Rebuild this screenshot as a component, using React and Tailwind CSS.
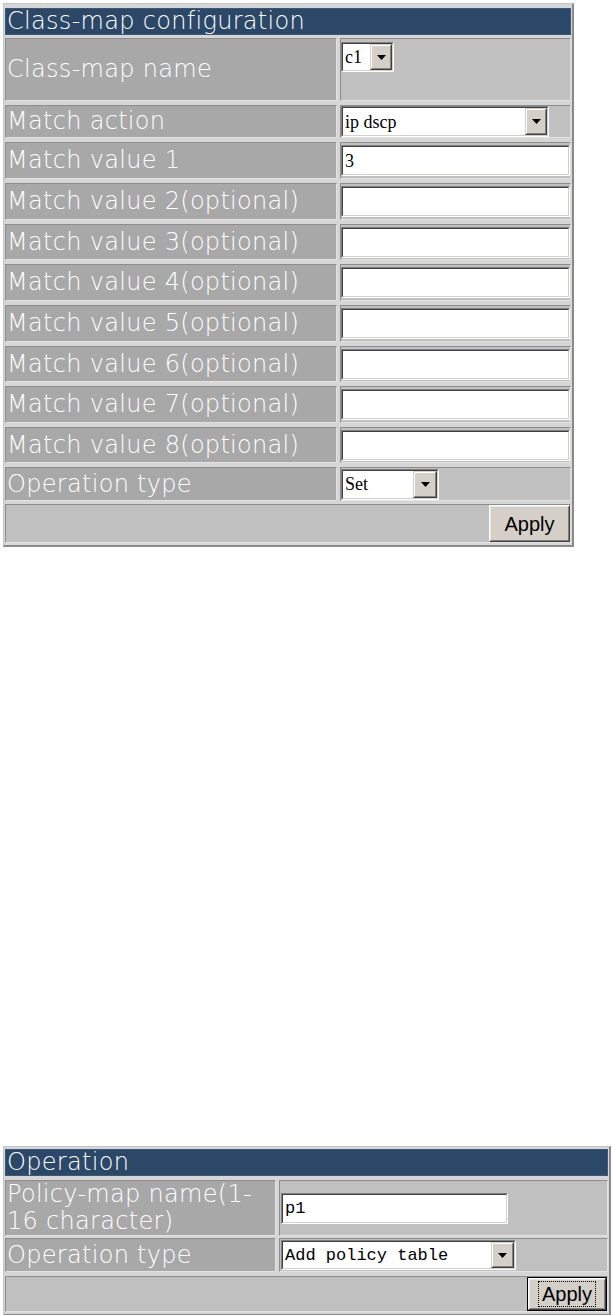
import React from 'react';

const LABEL = "font-['DejaVu_Sans',sans-serif] font-extralight text-[24px] leading-[27px] tracking-[0.3px] text-white whitespace-nowrap";
const bevel = 'border border-t-[#8c8c8c] border-l-[#8c8c8c] border-b-[#e2e2e2] border-r-[#e2e2e2]';

const Arrow = () => (
    <svg width="9" height="5" viewBox="0 0 9 5" className="block">
        <path d="M0 0h9L4.5 5z" fill="#000" />
    </svg>
);

// windows classic sunken box
const Sunken = ({ className = '', children }) => (
    <div className={`border border-t-[#808080] border-l-[#808080] border-b-[#ffffff] border-r-[#ffffff] ${className}`}>
        <div className="h-full border border-t-[#404040] border-l-[#404040] border-b-[#d4d0c8] border-r-[#d4d0c8] bg-white flex items-stretch">
            {children}
        </div>
    </div>
);

const Select = ({ value, className, font = "font-['Liberation_Serif',serif] text-[18px]", btn = 'w-[22px]' }) => (
    <Sunken className={className}>
        <div className={`flex-1 flex items-center pl-[2px] text-black leading-none overflow-hidden whitespace-nowrap ${font}`}>{value}</div>
        <div className={`${btn} bg-[#d4d0c8] border border-t-[#d4d0c8] border-l-[#d4d0c8] border-b-[#404040] border-r-[#404040]`}>
            <div className="h-full border border-t-white border-l-white border-b-[#808080] border-r-[#808080] flex items-center justify-center">
                <Arrow />
            </div>
        </div>
    </Sunken>
);

const TextInput = ({ value = '', className, font = "font-['Liberation_Serif',serif] text-[18px]" }) => (
    <Sunken className={className}>
        <div className={`flex-1 flex items-center pl-[2px] text-black leading-none ${font}`}>{value}</div>
    </Sunken>
);

const ApplyButton = ({ className = '', focused }) => (
    <div className={`${focused ? 'border border-black' : ''} ${className}`}>
        <div className="h-full border border-t-white border-l-white border-b-[#404040] border-r-[#404040] bg-[#d4d0c8]">
            <div className="h-full border border-t-[#e8e8e8] border-l-[#e8e8e8] border-b-[#808080] border-r-[#808080] flex items-center justify-center p-[2px]">
                <span className={`font-['Liberation_Sans',sans-serif] text-[20px] leading-none text-black px-[1px] ${focused ? 'outline outline-1 outline-dotted outline-black outline-offset-2' : ''}`}>
                    Apply
                </span>
            </div>
        </div>
    </div>
);

const Row = ({ label, height, cols, children, valueClass = 'items-center' }) => (
    <div className={`grid ${cols} gap-x-[3px]`} style={{ height }}>
        <div className={`${bevel} bg-[#a8a8a8] flex items-center pl-[1px] ${LABEL}`}>{label}</div>
        <div className={`${bevel} bg-[#c0c0c0] flex ${valueClass}`}>{children}</div>
    </div>
);

const Header = ({ title, height }) => (
    <div className={`bg-[#2c4868] border border-[#3a5878] flex items-center pl-[1px] ${LABEL}`} style={{ height }}>
        {title}
    </div>
);

const Gap = ({ h }) => <div style={{ height: h }} />;

const ClassMapTable = () => {
    const cols = 'grid-cols-[332px_1fr]';
    // row heights vary by a pixel in the original
    const optional = [[2, 37], [3, 36], [4, 37], [5, 37], [6, 36], [7, 37], [8, 36]];
    return (
        <div className="ml-[3px] mt-[3px] w-[571px] bg-[#d6d6d6] border-t border-l border-t-[#c4c4c4] border-l-[#c4c4c4] border-b-2 border-r-2 border-b-[#8a8a8a] border-r-[#8a8a8a] pt-[4px] pl-[1px] pr-[1px] pb-[2px] flex flex-col">
            <Header title="Class-map configuration" height={27} />
            <Gap h={3} />
            <Row label="Class-map name" height={63} cols={cols} valueClass="items-start pt-[3px]">
                <Select value="c1" className="w-[53px] h-[30px]" />
            </Row>
            <Gap h={4} />
            <Row label="Match action" height={33} cols={cols}>
                <Select value="ip dscp" className="w-[208px] h-[31px]" />
            </Row>
            <Gap h={4} />
            <Row label="Match value 1" height={37} cols={cols}>
                <TextInput value="3" className="w-[229px] h-[31px]" />
            </Row>
            {optional.map(([n, h]) => (
                <React.Fragment key={n}>
                    <Gap h={4} />
                    <Row label={`Match value ${n}(optional)`} height={h} cols={cols}>
                        <TextInput className="w-[229px] h-[31px]" />
                    </Row>
                </React.Fragment>
            ))}
            <Gap h={4} />
            <Row label="Operation type" height={34} cols={cols}>
                <Select value="Set" className="w-[98px] h-[31px]" btn="w-[24px]" />
            </Row>
            <Gap h={3} />
            <div className={`${bevel} bg-[#c0c0c0] h-[39px] flex items-stretch justify-end`}>
                <ApplyButton className="w-[81px]" />
            </div>
        </div>
    );
};

const OperationTable = () => {
    const cols = 'grid-cols-[271px_1fr]';
    const mono = "font-['Liberation_Mono',monospace] text-[17px]";
    return (
        <div className="ml-[3px] mt-[599px] w-[608px] bg-[#d6d6d6] border-t border-l border-t-[#c4c4c4] border-l-[#c4c4c4] border-b-2 border-r-2 border-b-[#8a8a8a] border-r-[#8a8a8a] pt-[2px] pl-[1px] pr-[1px] pb-[2px] flex flex-col">
            <Header title="Operation" height={27} />
            <Gap h={4} />
            <Row
                label={<span>Policy-map name(1-<br />16 character)</span>}
                height={56}
                cols={cols}
            >
                <TextInput value="p1" className="ml-[1px] w-[227px] h-[31px]" font={mono} />
            </Row>
            <Gap h={2} />
            <Row label="Operation type" height={34} cols={cols}>
                <Select value="Add policy table" className="ml-[1px] w-[235px] h-[30px]" font={mono} btn="w-[23px]" />
            </Row>
            <Gap h={4} />
            <div className={`${bevel} bg-[#c0c0c0] h-[36px] flex items-stretch justify-end`}>
                <ApplyButton className="w-[80px]" focused />
            </div>
        </div>
    );
};

const App = () => {
    return (
        <div className="w-[613px] h-[1315px] bg-white overflow-hidden">
            <ClassMapTable />
            <OperationTable />
        </div>
    );
};

export default App;
